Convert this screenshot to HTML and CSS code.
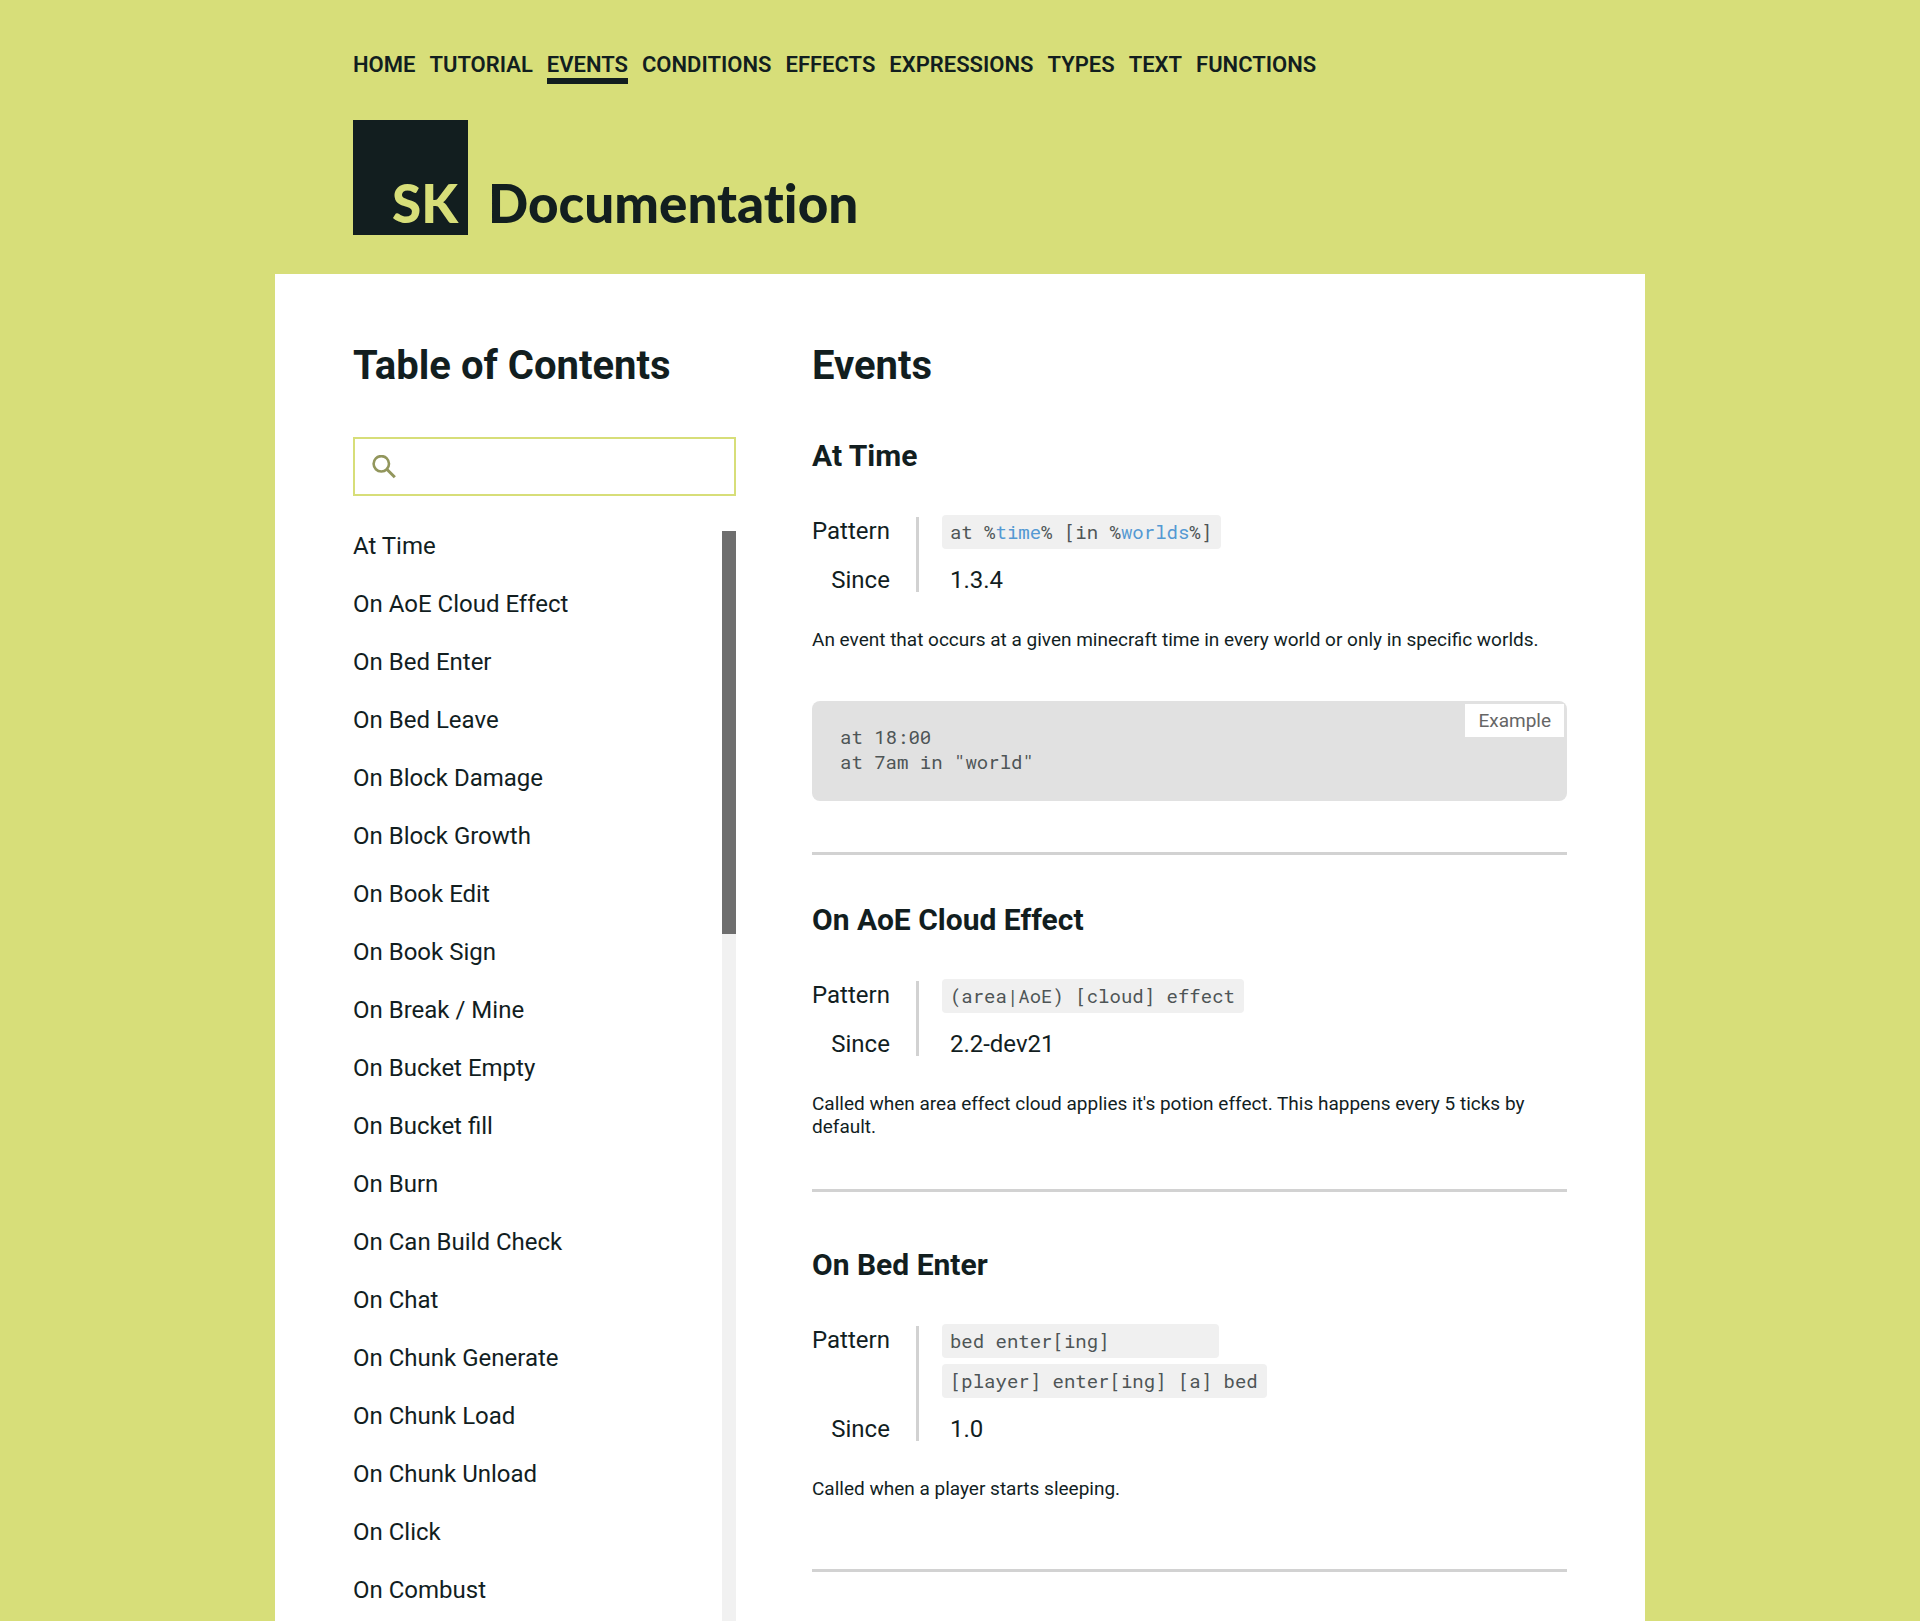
FILE: index.html
```html
<!DOCTYPE html>
<html lang="en">
<head>
<meta charset="utf-8">
<meta name="viewport" content="width=device-width, initial-scale=1">
<title>SK Documentation - Events</title>
<link rel="stylesheet" href="styles.css">
</head>
<body>
<header class="site-header">
  <nav class="main-nav" aria-label="Main">
    <a href="#home">HOME</a>
    <a href="#tutorial">TUTORIAL</a>
    <a href="#events" class="active" aria-current="page">EVENTS</a>
    <a href="#conditions">CONDITIONS</a>
    <a href="#effects">EFFECTS</a>
    <a href="#expressions">EXPRESSIONS</a>
    <a href="#types">TYPES</a>
    <a href="#text">TEXT</a>
    <a href="#functions">FUNCTIONS</a>
  </nav>
  <h1 class="brand"><span class="logo">SK</span><span class="brand-name">Documentation</span></h1>
</header>

<main class="panel">
  <aside class="toc">
    <h2>Table of Contents</h2>
    <label class="search">
      <svg class="search-icon" viewBox="0 0 24 24" aria-hidden="true"><circle cx="9.3" cy="8.8" r="7.7" fill="none" stroke="currentColor" stroke-width="2.6"/><path d="M14.8 14.3L22.8 22.3" stroke="currentColor" stroke-width="3" fill="none"/></svg>
      <input type="search" aria-label="Search events">
    </label>
    <div class="toc-body">
      <ul class="toc-list">
        <li><a href="#at-time">At Time</a></li>
        <li><a href="#aoe-cloud">On AoE Cloud Effect</a></li>
        <li><a href="#bed-enter">On Bed Enter</a></li>
        <li><a href="#bed-leave">On Bed Leave</a></li>
        <li><a href="#block-damage">On Block Damage</a></li>
        <li><a href="#block-growth">On Block Growth</a></li>
        <li><a href="#book-edit">On Book Edit</a></li>
        <li><a href="#book-sign">On Book Sign</a></li>
        <li><a href="#break">On Break / Mine</a></li>
        <li><a href="#bucket-empty">On Bucket Empty</a></li>
        <li><a href="#bucket-fill">On Bucket fill</a></li>
        <li><a href="#burn">On Burn</a></li>
        <li><a href="#can-build">On Can Build Check</a></li>
        <li><a href="#chat">On Chat</a></li>
        <li><a href="#chunk-generate">On Chunk Generate</a></li>
        <li><a href="#chunk-load">On Chunk Load</a></li>
        <li><a href="#chunk-unload">On Chunk Unload</a></li>
        <li><a href="#click">On Click</a></li>
        <li><a href="#combust">On Combust</a></li>
      </ul>
      <div class="scroll-track"><div class="scroll-thumb"></div></div>
    </div>
  </aside>

  <section class="content">
    <h2>Events</h2>

    <article class="entry" id="at-time">
      <h3>At Time</h3>
      <dl class="facts">
        <dt>Pattern</dt>
        <dd class="patterns"><code>at %<b>time</b>% [in %<b>worlds</b>%]</code></dd>
        <dt>Since</dt>
        <dd class="since">1.3.4</dd>
      </dl>
      <p>An event that occurs at a given minecraft time in every world or only in specific worlds.</p>
      <div class="example">
        <span class="example-label">Example</span>
<pre>at 18:00
at 7am in "world"</pre>
      </div>
    </article>

    <article class="entry" id="aoe-cloud">
      <h3>On AoE Cloud Effect</h3>
      <dl class="facts">
        <dt>Pattern</dt>
        <dd class="patterns"><code>(area|AoE) [cloud] effect</code></dd>
        <dt>Since</dt>
        <dd class="since">2.2-dev21</dd>
      </dl>
      <p>Called when area effect cloud applies it's potion effect. This happens every 5 ticks by default.</p>
    </article>

    <article class="entry entry-roomy" id="bed-enter">
      <h3>On Bed Enter</h3>
      <dl class="facts">
        <dt>Pattern</dt>
        <dd class="patterns"><code>bed enter[ing]</code><code>[player] enter[ing] [a] bed</code></dd>
        <dt>Since</dt>
        <dd class="since">1.0</dd>
      </dl>
      <p>Called when a player starts sleeping.</p>
    </article>
  </section>
</main>
</body>
</html>
```

FILE: styles.css
```css
* {
  box-sizing: border-box;
}

body {
  margin: 0;
  min-height: 100vh;
  display: flex;
  flex-direction: column;
  background: #d7de79;
  color: #121e1f;
  font-family: Roboto, "Liberation Sans", sans-serif;
}

h1, h2, h3, p, dl, dd, ul, pre {
  margin: 0;
  padding: 0;
}

a {
  color: inherit;
  text-decoration: none;
}

.site-header,
.panel {
  width: 100%;
  max-width: 1370px;
  margin: 0 auto;
  padding: 0 78px;
}

.site-header {
  padding-top: 52px;
  padding-bottom: 39px;
}

.main-nav {
  display: flex;
  flex-wrap: wrap;
  gap: 14px;
  font-size: 22px;
  line-height: 26px;
  font-weight: 600;
}

.main-nav a {
  border-bottom: 6px solid transparent;
}

.main-nav .active {
  border-bottom-color: #121e1f;
}

.brand {
  display: flex;
  align-items: flex-end;
  gap: 20px;
  margin-top: 36px;
  font: 900 53px/64px Lato, sans-serif;
  font-variant-ligatures: none;
}

.logo {
  width: 115px;
  height: 115px;
  display: flex;
  justify-content: flex-end;
  align-items: flex-end;
  padding-right: 10px;
  background: #121e1f;
  color: #d7de79;
}

.panel {
  flex: 1;
  display: grid;
  grid-template-columns: minmax(0, 383fr) minmax(0, 755fr);
  gap: 76px;
  padding-top: 67px;
  background: #fff;
}

h2 {
  margin-bottom: 46px;
  font-size: 40px;
  line-height: 50px;
  font-weight: 700;
}

.toc {
  display: flex;
  flex-direction: column;
}

.search {
  display: flex;
  align-items: center;
  gap: 12px;
  height: 59px;
  padding: 0 17px;
  border: 2px solid #d7de79;
}

.search-icon {
  width: 24px;
  height: 24px;
  flex: none;
  color: #92965c;
}

.search input {
  flex: 1;
  min-width: 0;
  border: 0;
  outline: 0;
  background: none;
  font: inherit;
  font-size: 24px;
}

.toc-body {
  flex: 1;
  display: flex;
  justify-content: space-between;
  margin-top: 35px;
}

.toc-list {
  display: flex;
  flex-direction: column;
  gap: 28px;
  list-style: none;
  font-size: 24px;
  line-height: 30px;
}

.scroll-track {
  width: 14px;
  display: grid;
  grid-template-rows: 37fr 63fr;
  background: #f1f1f1;
}

.scroll-thumb {
  background: #6e6e6e;
}

.entry {
  padding: 46px 0 51px;
  border-bottom: 3px solid #d2d2d2;
}

h2 + .entry {
  padding-top: 0;
}

.entry-roomy {
  padding: 54px 0 69px;
}

h3 {
  font-size: 30px;
  line-height: 38px;
  font-weight: 700;
}

.facts {
  display: grid;
  grid-template-columns: auto 3px 1fr;
  gap: 15px 0;
  margin-top: 40px;
  font-size: 24px;
  line-height: 32px;
}

.facts::before {
  content: "";
  grid-column: 2;
  grid-row: 1 / 3;
  margin: 2px 0 4px;
  background: #d2d2d2;
}

.facts dt {
  grid-column: 1;
  padding-right: 26px;
  text-align: right;
}

.facts dd {
  grid-column: 3;
  margin-left: 23px;
}

.facts .since {
  padding-left: 8px;
}

.patterns {
  display: flex;
  flex-direction: column;
  align-items: flex-start;
  gap: 6px;
}

code,
pre {
  font: 19px/25px "Roboto Mono", "Liberation Mono", monospace;
  color: #4e5556;
}

code {
  min-width: 277px;
  padding: 4px 9px 5px 8px;
  border-radius: 4px;
  background: #f0f0f0;
}

code b {
  font-weight: 400;
  color: #5499d3;
}

.entry p {
  margin-top: 32px;
  font-size: 19px;
  line-height: 23px;
}

.example {
  position: relative;
  margin-top: 50px;
  padding: 23px 28px 27px;
  border-radius: 8px;
  background: #e1e1e1;
}

.example-label {
  position: absolute;
  top: 3px;
  right: 3px;
  padding: 5px 13px;
  background: #fff;
  color: #666;
  font-size: 19px;
  line-height: 23px;
}
```
